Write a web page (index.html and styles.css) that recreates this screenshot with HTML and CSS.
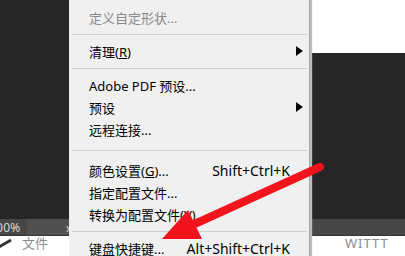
FILE: index.html
```html
<!DOCTYPE html>
<html lang="zh-CN">
<head>
<meta charset="utf-8">
<link rel="stylesheet" href="styles.css">
</head>
<body>
<div class="screen">
  <div class="col col-left">
    <div class="dark"></div>
    <div class="band"><span class="zoom">00%</span><span class="field"><span class="chev">›</span></span></div>
    <div class="paper"><span class="stroke"></span><span class="label">文件</span></div>
  </div>
  <div class="menu">
    <div class="item disabled"><span class="text">定义自定形状...</span></div>
    <div class="sep"></div>
    <div class="item"><span class="text">清理(<u>R</u>)</span><span class="sub"></span></div>
    <div class="sep"></div>
    <div class="item"><span class="text">Adobe PDF 预设...</span></div>
    <div class="item"><span class="text">预设</span><span class="sub"></span></div>
    <div class="item"><span class="text">远程连接...</span></div>
    <div class="sep tall"></div>
    <div class="item"><span class="text">颜色设置(<u>G</u>)...</span><span class="key">Shift+Ctrl+K</span></div>
    <div class="item"><span class="text">指定配置文件...</span></div>
    <div class="item"><span class="text">转换为配置文件(<u>V</u>)...</span></div>
    <div class="sep"></div>
    <div class="item"><span class="text">键盘快捷键...</span><span class="key">Alt+Shift+Ctrl+K</span></div>
  </div>
  <div class="col col-right">
    <div class="paper top"></div>
    <div class="dark"></div>
    <div class="band"></div>
    <div class="paper"><span class="label wide">WITTT</span></div>
  </div>
  <svg class="arrow" viewBox="0 0 405 256" width="405" height="256">
    <line x1="320" y1="167" x2="188" y2="227" stroke="#f2141c" stroke-width="8" stroke-linecap="round"/>
    <polygon points="162,239 188,210 202,239" fill="#f2141c"/>
  </svg>
</div>
</body>
</html>
```
FILE: styles.css
```css
* { box-sizing: border-box; }
html, body { margin: 0; padding: 0; }
body {
  width: 405px;
  height: 256px;
  overflow: hidden;
  background: #262626;
  font-family: "Noto Sans", "Noto Sans CJK SC", sans-serif;
}
.screen {
  position: relative;
  width: 405px;
  height: 256px;
  display: grid;
  grid-template-columns: 69px 241px 1fr;
  overflow: hidden;
}
.col {
  display: grid;
  min-height: 0;
}
.col-left { grid-template-rows: 219px 17px 1fr; }
.col-right { grid-template-rows: 53px 166px 17px 1fr; }
.dark { background: #262626; }
.band {
  background: #474747;
  border-bottom: 1px solid #333;
  display: flex;
  align-items: center;
  color: #d8d8d8;
  font-size: 12px;
}
.zoom { width: 31px; letter-spacing: 0.3px; margin-left: -4px; }
.field {
  flex: 1;
  align-self: stretch;
  background: #505050;
  display: flex;
  justify-content: flex-end;
  align-items: center;
}
.chev { color: #cfcfcf; font-size: 14px; margin-right: -1px; }
.paper {
  background: #ffffff;
  display: flex;
  align-items: flex-start;
  overflow: hidden;
  color: #8c8c8c;
  font-size: 13px;
}
.stroke {
  width: 14px;
  height: 3px;
  background: #333;
  transform: rotate(-30deg);
  margin: 6px 0 0 -2px;
}
.label { margin: -2px 0 0 10px; line-height: 18px; }
.label.wide { margin-left: 34px; letter-spacing: 1px; }
.col-right .paper { border-left: 1px solid #dcdcdc; }

.menu {
  background: #f0f0f0;
  border-right: 1px solid #a7a7a7;
  box-shadow: 2px 0 1px #bdbdbd;
  padding-top: 6px;
  display: flex;
  flex-direction: column;
  z-index: 1;
  font-size: 13px;
  color: #000;
}
.item {
  height: 22px;
  flex: none;
  display: flex;
  align-items: center;
  padding: 0 0 0 20px;
}
.item .text { flex: 1; white-space: nowrap; }
.item.disabled { color: #8a8a8a; }
.key { margin-right: 19px; font-size: 14px; white-space: nowrap; }
.sub {
  width: 0;
  height: 0;
  border-top: 5.5px solid transparent;
  border-bottom: 5.5px solid transparent;
  border-left: 7px solid #000;
  margin-right: 6px;
}
.sep {
  height: 1px;
  flex: none;
  background: #cdcdcd;
  margin: 6px 2px 5px 3px;
}
.sep.tall { margin: 10px 2px 8px 3px; }
.arrow {
  position: absolute;
  left: 0;
  top: 0;
  z-index: 2;
  pointer-events: none;
}
```
